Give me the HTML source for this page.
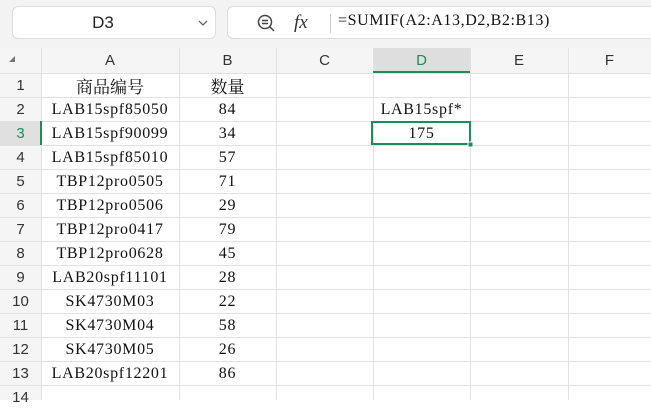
<!DOCTYPE html>
<html><head><meta charset="utf-8"><style>
*{margin:0;padding:0;box-sizing:border-box}
body{width:651px;height:400px;overflow:hidden;background:#fff;position:relative;font-family:"Liberation Sans",sans-serif}
.tb{position:absolute;left:0;top:0;width:651px;height:48px;background:#f3f3f3}
.nb{position:absolute;left:12px;top:6px;width:204px;height:33px;background:#fff;border:1px solid #dcdcdc;border-radius:6px}
.fb{position:absolute;left:227px;top:6px;width:440px;height:33px;background:#fff;border:1px solid #dcdcdc;border-radius:6px}
.cell{position:absolute;font-family:"Liberation Serif","Noto Serif CJK SC",serif;font-size:16px;letter-spacing:0.7px;color:#111;text-align:center;line-height:24px}
.h{position:absolute;font-size:15px;color:#333;text-align:center;line-height:25px}
.r{position:absolute;left:0;width:41px;font-size:15px;color:#333;text-align:center;line-height:24px}
</style></head><body>
<div class="tb"></div>
<div class="nb"><div style="position:absolute;left:0;width:180px;top:6px;text-align:center;font-size:17px;color:#222">D3</div>
<svg style="position:absolute;left:183px;top:10px" width="14" height="12"><path d="M3 4 L7 8 L11 4" stroke="#666" stroke-width="1.3" fill="none"/></svg></div>
<div class="fb">
<svg style="position:absolute;left:28px;top:6px" width="22" height="22"><circle cx="9" cy="9" r="6.5" stroke="#444" stroke-width="1.5" fill="none"/><path d="M6 7.5h6M6 10.5h6M14 14l4 4" stroke="#444" stroke-width="1.5"/></svg>
<div style="position:absolute;left:66px;top:5px;font-family:'Liberation Serif',serif;font-style:italic;font-size:19px;color:#333">fx</div>
<div style="position:absolute;left:102px;top:7px;width:1px;height:19px;background:#ccc"></div>
<div style="position:absolute;left:110px;top:5px;font-family:'Liberation Serif',serif;font-size:16px;color:#111;letter-spacing:0.6px">=SUMIF(A2:A13,D2,B2:B13)</div>
</div>
<svg style="position:absolute;left:0;top:48px" width="651" height="352">
<rect x="0" y="0" width="651" height="25" fill="#f5f5f5"/>
<rect x="0" y="25" width="41" height="327" fill="#f5f5f5"/>
<rect x="373" y="0" width="97" height="25" fill="#dedede"/>
<rect x="0" y="73" width="41" height="24" fill="#e0e0e0"/>
<g stroke="#e1e1e1" stroke-width="1">
<path d="M41.5 0V352M179.5 0V352M276.5 0V352M373.5 0V352M470.5 0V352M568.5 0V352"/>
<path d="M0 25.5H651M0 49.5H651M0 73.5H651M0 97.5H651M0 121.5H651M0 145.5H651M0 169.5H651M0 193.5H651M0 217.5H651M0 241.5H651M0 265.5H651M0 289.5H651M0 313.5H651M0 337.5H651"/>
</g>
<rect x="373" y="23" width="97" height="2" fill="#1e8c5a"/>
<rect x="40" y="73" width="2" height="24" fill="#1e8c5a"/>
<rect x="372" y="74" width="98" height="22" fill="none" stroke="#1e8c5a" stroke-width="2"/>
<rect x="468" y="94" width="5" height="5" fill="#1e8c5a" stroke="#fff" stroke-width="1"/>
<path d="M9 14L15 8V14Z" fill="#777"/>
</svg>
<div class="h" style="left:41px;top:48px;width:138px">A</div>
<div class="h" style="left:179px;top:48px;width:97px">B</div>
<div class="h" style="left:276px;top:48px;width:97px">C</div>
<div class="h" style="left:373px;top:48px;width:97px;color:#1e8c5a">D</div>
<div class="h" style="left:470px;top:48px;width:98px">E</div>
<div class="h" style="left:568px;top:48px;width:83px">F</div>
<div class="r" style="top:74px">1</div>
<div class="r" style="top:98px">2</div>
<div class="r" style="top:122px;color:#1e8c5a">3</div>
<div class="r" style="top:146px">4</div>
<div class="r" style="top:170px">5</div>
<div class="r" style="top:194px">6</div>
<div class="r" style="top:218px">7</div>
<div class="r" style="top:242px">8</div>
<div class="r" style="top:266px">9</div>
<div class="r" style="top:290px">10</div>
<div class="r" style="top:314px">11</div>
<div class="r" style="top:338px">12</div>
<div class="r" style="top:362px">13</div>
<div class="r" style="top:386px">14</div>
<div style="position:absolute;left:41px;top:74px;width:138px">
<div class="cell" style="position:relative;width:138px;font-family:'Noto Serif CJK SC','Liberation Serif',serif;letter-spacing:0;font-size:17px">商品编号</div>
<div class="cell" style="position:relative;width:138px">LAB15spf85050</div>
<div class="cell" style="position:relative;width:138px">LAB15spf90099</div>
<div class="cell" style="position:relative;width:138px">LAB15spf85010</div>
<div class="cell" style="position:relative;width:138px">TBP12pro0505</div>
<div class="cell" style="position:relative;width:138px">TBP12pro0506</div>
<div class="cell" style="position:relative;width:138px">TBP12pro0417</div>
<div class="cell" style="position:relative;width:138px">TBP12pro0628</div>
<div class="cell" style="position:relative;width:138px">LAB20spf11101</div>
<div class="cell" style="position:relative;width:138px">SK4730M03</div>
<div class="cell" style="position:relative;width:138px">SK4730M04</div>
<div class="cell" style="position:relative;width:138px">SK4730M05</div>
<div class="cell" style="position:relative;width:138px">LAB20spf12201</div>
</div>
<div style="position:absolute;left:179px;top:74px;width:97px">
<div class="cell" style="position:relative;width:97px;font-family:'Noto Serif CJK SC','Liberation Serif',serif;letter-spacing:0;font-size:17px">数量</div>
<div class="cell" style="position:relative;width:97px">84</div>
<div class="cell" style="position:relative;width:97px">34</div>
<div class="cell" style="position:relative;width:97px">57</div>
<div class="cell" style="position:relative;width:97px">71</div>
<div class="cell" style="position:relative;width:97px">29</div>
<div class="cell" style="position:relative;width:97px">79</div>
<div class="cell" style="position:relative;width:97px">45</div>
<div class="cell" style="position:relative;width:97px">28</div>
<div class="cell" style="position:relative;width:97px">22</div>
<div class="cell" style="position:relative;width:97px">58</div>
<div class="cell" style="position:relative;width:97px">26</div>
<div class="cell" style="position:relative;width:97px">86</div>
</div>
<div class="cell" style="left:373px;top:98px;width:97px">LAB15spf*</div>
<div class="cell" style="left:373px;top:122px;width:97px">175</div>
</body></html>
